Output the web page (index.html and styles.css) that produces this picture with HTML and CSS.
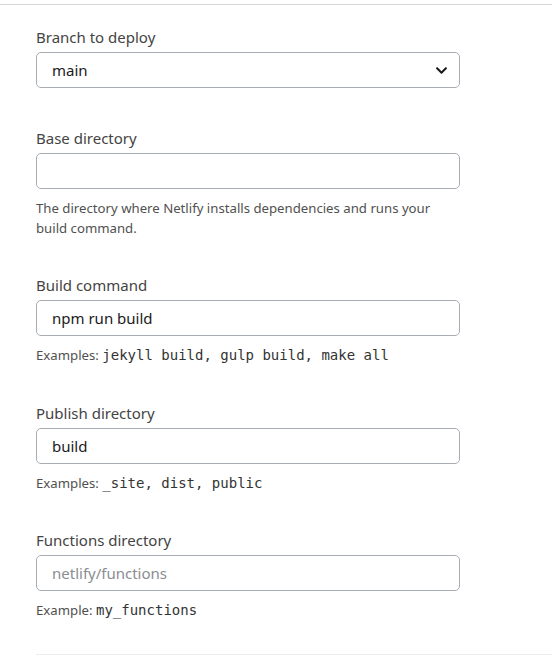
FILE: index.html
```html
<!DOCTYPE html>
<html>
<head>
<meta charset="utf-8">
<link rel="stylesheet" href="styles.css">
</head>
<body>
<div class="page">
  <div class="form">
    <div class="field">
      <label class="label">Branch to deploy</label>
      <div class="select">
        <span class="value">main</span>
        <svg class="chev" width="13" height="13" viewBox="0 0 448 512"><path fill="#1a1a1a" d="M207 381.5L12.7 187.1c-9.4-9.4-9.4-24.6 0-33.9l22.7-22.7c9.4-9.4 24.5-9.4 33.9 0L224 285.3l154.7-154.8c9.4-9.4 24.6-9.4 33.9 0l22.7 22.7c9.4 9.4 9.4 24.6 0 33.9L241 381.5c-9.4 9.4-24.6 9.4-34 0z"/></svg>
      </div>
    </div>
    <div class="field">
      <label class="label">Base directory</label>
      <div class="input"></div>
      <p class="help">The directory where Netlify installs dependencies and runs your build command.</p>
    </div>
    <div class="field field-build">
      <label class="label">Build command</label>
      <div class="input"><span class="value">npm run build</span></div>
      <p class="help">Examples: <code>jekyll build, gulp build, make all</code></p>
    </div>
    <div class="field">
      <label class="label">Publish directory</label>
      <div class="input"><span class="value">build</span></div>
      <p class="help">Examples: <code>_site, dist, public</code></p>
    </div>
    <div class="field">
      <label class="label">Functions directory</label>
      <div class="input"><span class="placeholder">netlify/functions</span></div>
      <p class="help">Example: <code>my_functions</code></p>
    </div>
  </div>
</div>
</body>
</html>
```
FILE: styles.css
```css
html, body {
  margin: 0;
  padding: 0;
  background: #ffffff;
}
body {
  font-family: "Noto Sans", "Open Sans", sans-serif;
  color: #4d4d4d;
}
.page {
  padding-top: 4px;
}
.form {
  border-top: 1px solid #d4d6da;
  padding: 20px 0 0 36px;
}
.field {
  display: flex;
  flex-direction: column;
  width: 424px;
  padding-bottom: 35px;
}
.field:first-child {
  padding-bottom: 38px;
}
.field-build {
  padding-bottom: 36px;
}
.field:last-child {
  width: auto;
  padding-bottom: 34px;
  border-bottom: 1px solid #ececec;
}
.field:last-child .input {
  width: 424px;
  box-sizing: border-box;
}
.label {
  font-size: 15px;
  line-height: 24px;
  height: 24px;
  margin-bottom: 3px;
  color: #444444;
}
.select, .input {
  height: 36px;
  box-sizing: border-box;
  border: 1px solid #a8adb3;
  border-radius: 5px;
  display: flex;
  align-items: center;
  padding: 0 15px;
  font-size: 15px;
}
.select {
  justify-content: space-between;
  padding-right: 11px;
}
.value {
  color: #1a1a1a;
}
.placeholder {
  color: #8a8d91;
}
.chev {
  display: block;
}
.help {
  margin: 9px 0 0;
  font-size: 13.2px;
  line-height: 20px;
  color: #505050;
}
code {
  font-family: "DejaVu Sans Mono", monospace;
  font-size: 14px;
  color: #333333;
}
```
